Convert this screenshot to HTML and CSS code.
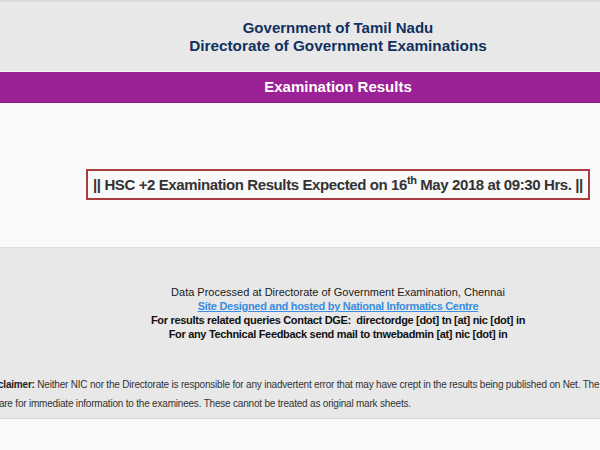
FILE: index.html
```html
<!DOCTYPE html>
<html lang="en">
<head>
<meta charset="utf-8">
<title>Examination Results</title>
<link rel="stylesheet" href="styles.css">
</head>
<body>
<div class="page">
  <header class="masthead">
    <div class="title">Government of Tamil Nadu</div>
    <div class="title">Directorate of Government Examinations</div>
  </header>
  <div class="band">Examination Results</div>
  <main class="content">
    <div class="notice">|| HSC +2 Examination Results Expected on 16<sup>th</sup> May 2018 at 09:30 Hrs. ||</div>
  </main>
  <footer class="footer">
    <div class="info">
      <div class="plain">Data Processed at Directorate of Government Examination, Chennai</div>
      <div><a class="link" href="#">Site Designed and hosted by National Informatics Centre</a></div>
      <div class="strong">For results related queries Contact DGE:&nbsp; directordge [dot] tn [at] nic [dot] in</div>
      <div class="strong">For any Technical Feedback send mail to tnwebadmin [at] nic [dot] in</div>
    </div>
    <p class="disclaimer"><b>Disclaimer:</b> Neither NIC nor the Directorate is responsible for any inadvertent error that may have crept in the results being published on Net. The results published on<br>net are for immediate information to the examinees. These cannot be treated as original mark sheets.</p>
  </footer>
  <div class="bottom"></div>
</div>
</body>
</html>
```
FILE: styles.css
```css
html, body {
  margin: 0;
  padding: 0;
  overflow: hidden;
  background: #f9f9f9;
  font-family: "Liberation Sans", Arial, sans-serif;
}
.page {
  width: 736px;
  margin-left: -30px;
  border-top: 2px solid #dcdcdc;
}
.masthead {
  background: #e8e8e8;
  padding: 17px 0 16px;
  text-align: center;
}
.title {
  color: #10305f;
  font-weight: bold;
  font-size: 15px;
  line-height: 18px;
}
.title + .title {
  font-size: 15.3px;
}
.band {
  border-top: 1px solid #f3f3f3;
  border-bottom: 1px solid #861a83;
  background: #9b2196;
  color: #ffffff;
  font-weight: bold;
  font-size: 15px;
  line-height: 30px;
  text-align: center;
}
.content {
  height: 144px;
  box-sizing: border-box;
  padding-top: 66px;
  text-align: center;
  background: #f9f9f9;
}
.notice {
  display: inline-block;
  border: 2px solid #a83c3e;
  padding: 0 5px;
  line-height: 27px;
  font-size: 15px;
  letter-spacing: -0.4px;
  font-weight: bold;
  color: #333333;
}
.notice sup {
  font-size: 11px;
  line-height: 0;
}
.footer {
  border-top: 1px solid #dedede;
  border-bottom: 1px solid #dadada;
  background: #e8e8e8;
  padding: 37px 0 5px;
}
.info {
  text-align: center;
  font-size: 11px;
  line-height: 14px;
  color: #111111;
}
.plain {
  color: #1a1a1a;
}
.link {
  color: #3a8ddf;
  font-weight: bold;
  letter-spacing: -0.3px;
}
.strong {
  font-weight: bold;
  letter-spacing: -0.32px;
}
.disclaimer {
  margin: 34px 0 0;
  padding-left: 13px;
  font-size: 10px;
  letter-spacing: -0.2px;
  line-height: 19px;
  color: #333333;
  white-space: nowrap;
}
.disclaimer b {
  color: #222222;
}
.bottom {
  height: 40px;
  background: #f9f9f9;
}
```
